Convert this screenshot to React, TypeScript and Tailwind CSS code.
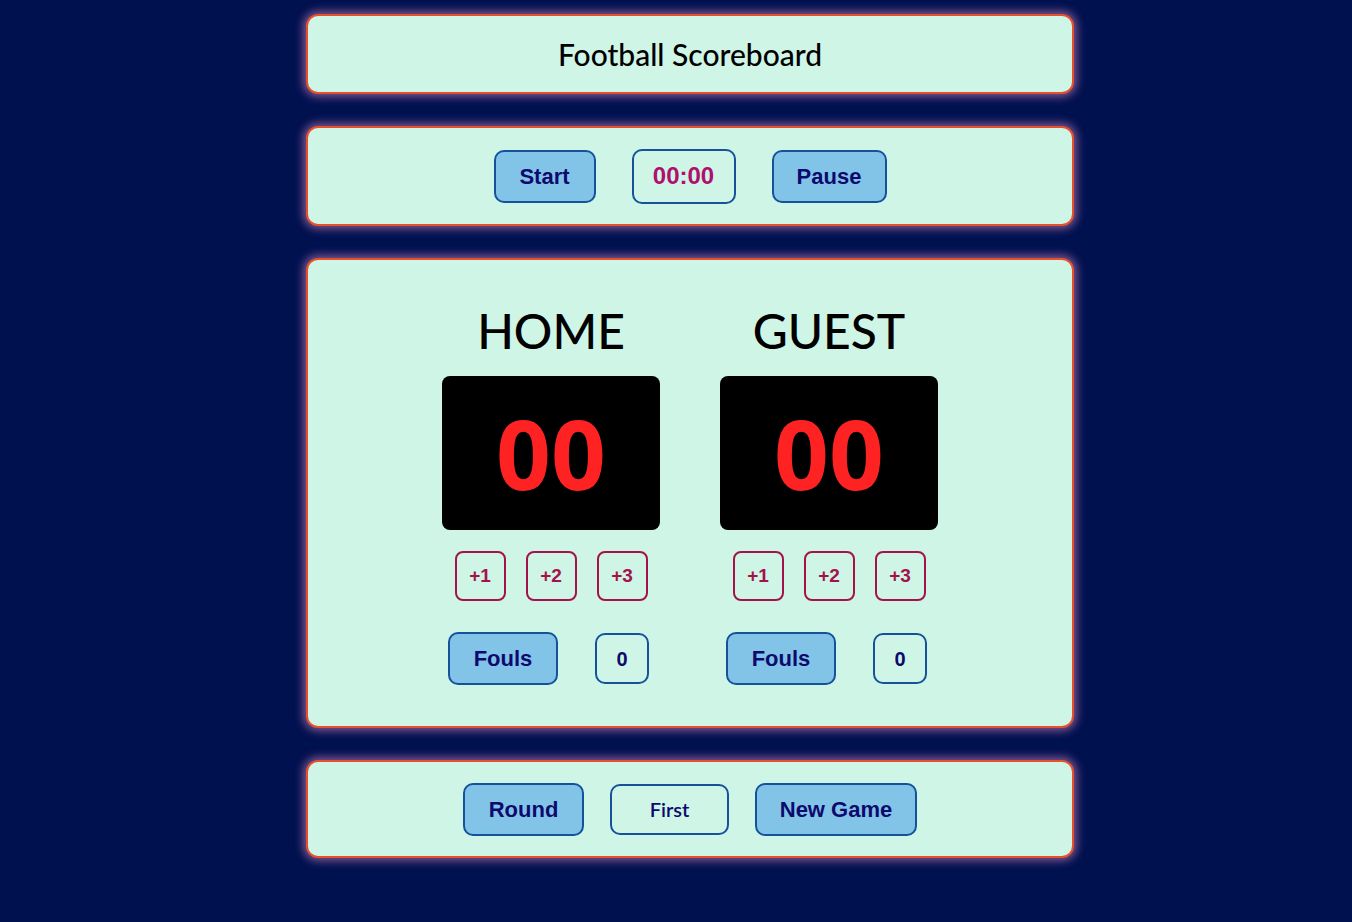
import React from "react";

const panel =
  "w-[768px] rounded-[12px] border-2 border-[#e4512c] bg-[#cff5e7] shadow-[0_0_8px_3px_rgba(230,140,190,0.55)]";
const blueBtn =
  "flex items-center justify-center rounded-[10px] border-2 border-[#16529a] bg-[#82c4e8] text-[22px] font-bold text-[#0d0a6e] font-['Liberation_Sans',Arial,sans-serif]";
const outlineBtn =
  "flex items-center justify-center rounded-[10px] border-2 border-[#16529a] text-[#0d0a6e]";

function Team({ name }: { name: string }) {
  return (
    <div className="flex w-[218px] flex-col items-center">
      <div className="font-['Lato',sans-serif] text-[48px] font-medium leading-[56px] text-black">{name}</div>
      <div className="mt-[17px] flex h-[154px] w-[218px] items-center justify-center rounded-[8px] bg-black">
        <span className="font-['Open_Sans',sans-serif] text-[96px] font-bold leading-none text-[#ff2222]">00</span>
      </div>
      <div className="mt-[21px] flex gap-[20px]">
        {["+1", "+2", "+3"].map((t) => (
          <div
            key={t}
            className="flex h-[50px] w-[51px] items-center justify-center rounded-[8px] border-2 border-[#a3134a] font-['Liberation_Sans',Arial,sans-serif] text-[19px] font-bold text-[#a3134a]"
          >
            {t}
          </div>
        ))}
      </div>
      <div className="mt-[31px] flex items-center gap-[37px] pr-[5px]">
        <div className={`${blueBtn} h-[53px] w-[110px]`}>Fouls</div>
        <div className={`${outlineBtn} h-[51px] w-[54px] font-['Liberation_Sans',Arial,sans-serif] text-[20px] font-bold`}>0</div>
      </div>
    </div>
  );
}

export default function App() {
  return (
    <div className="min-h-[922px] w-full bg-[#001150] pl-[28px] pt-[14px]">
      <div className="mx-auto flex w-[768px] flex-col gap-[32px]">
        <div className={`${panel} flex h-[80px] items-center justify-center`}>
          <h1 className="font-['Lato',sans-serif] text-[30px] font-medium text-black">Football Scoreboard</h1>
        </div>
        <div className={`${panel} flex h-[100px] items-center justify-center gap-[36px]`}>
          <div className={`${blueBtn} h-[53px] w-[102px]`}>Start</div>
          <div className={`${outlineBtn} h-[55px] w-[104px] font-['Liberation_Sans',Arial,sans-serif] text-[24px] font-bold`}>
            <span className="text-[#b0106b]">00:00</span>
          </div>
          <div className={`${blueBtn} h-[53px] w-[115px]`}>Pause</div>
        </div>
        <div className={`${panel} flex h-[470px] justify-center gap-[60px] pt-[43px]`}>
          <Team name="HOME" />
          <Team name="GUEST" />
        </div>
        <div className={`${panel} flex h-[98px] items-center justify-center gap-[26px]`}>
          <div className={`${blueBtn} h-[53px] w-[121px]`}>Round</div>
          <div className={`${outlineBtn} h-[51px] w-[119px] font-['Lato',sans-serif] text-[20px] font-semibold`}>First</div>
          <div className={`${blueBtn} h-[53px] w-[162px]`}>New Game</div>
        </div>
      </div>
    </div>
  );
}
